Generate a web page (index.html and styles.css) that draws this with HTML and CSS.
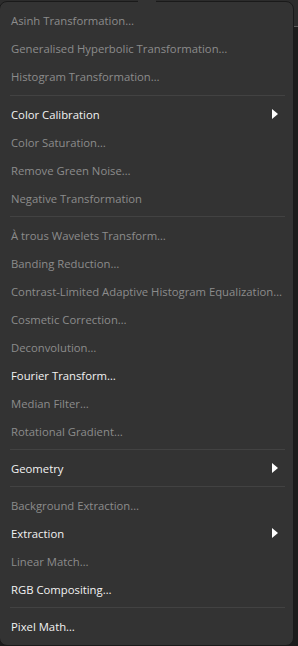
FILE: index.html
```html
<!DOCTYPE html>
<html lang="en">
<head>
  <meta charset="UTF-8" />
  <meta name="viewport" content="width=device-width, initial-scale=1.0" />
  <title>Process Menu</title>
  <link rel="stylesheet" href="styles.css">
</head>
<body>
  <div class="toolbar"></div>

  <div class="menu">
    <span class="notch"></span>
    <div class="item off">Asinh Transformation…</div>
    <div class="item off">Generalised Hyperbolic Transformation…</div>
    <div class="item off">Histogram Transformation…</div>
    <hr class="sep first">
    <div class="item sub">Color Calibration <span class="arrow"></span></div>
    <div class="item off">Color Saturation…</div>
    <div class="item off">Remove Green Noise…</div>
    <div class="item off">Negative Transformation</div>
    <hr class="sep">
    <div class="item off">À trous Wavelets Transform…</div>
    <div class="item off">Banding Reduction…</div>
    <div class="item off">Contrast-Limited Adaptive Histogram Equalization…</div>
    <div class="item off">Cosmetic Correction…</div>
    <div class="item off">Deconvolution…</div>
    <div class="item">Fourier Transform…</div>
    <div class="item off">Median Filter…</div>
    <div class="item off">Rotational Gradient…</div>
    <hr class="sep">
    <div class="item sub">Geometry <span class="arrow"></span></div>
    <hr class="sep">
    <div class="item off">Background Extraction…</div>
    <div class="item sub">Extraction <span class="arrow"></span></div>
    <div class="item off">Linear Match…</div>
    <div class="item">RGB Compositing…</div>
    <hr class="sep">
    <div class="item">Pixel Math…</div>
  </div>
</body>
</html>
```

FILE: styles.css
```css
:root {
  --menu-bg: #333333;
  --sep: #424242;
  --text: #f2f2f2;
  --muted: #8c8c8c;
}
body {
  margin: 0;
  background: #1c1c1c;
  height: 646px;
  overflow: hidden;
  position: relative;
  font-family: "Open Sans", "Noto Sans", sans-serif;
  font-size: 11.3px;
}
.toolbar {
  height: 26px;
  background: #2c2c2c;
  border-bottom: 1px solid #5a5a5a;
}
.menu {
  position: absolute;
  top: 1px;
  left: -1px;
  width: 295px;
  box-sizing: border-box;
  padding: 4px 0 5px;
  background: var(--menu-bg);
  border: 1px solid #1a1a1a;
  border-radius: 8px;
}
.notch {
  position: absolute;
  top: -2px;
  left: 138px;
  width: 18px;
  height: 4px;
  background: var(--menu-bg);
}
.item {
  height: 28px;
  display: flex;
  align-items: center;
  justify-content: space-between;
  padding: 0 15px 0 11px;
  color: var(--text);
  white-space: nowrap;
}
.item.off {
  color: var(--muted);
}
.arrow {
  width: 0;
  height: 0;
  border-top: 5.5px solid transparent;
  border-bottom: 5.5px solid transparent;
  border-left: 6px solid #ffffff;
}
.sep {
  margin: 4px 8px 4px 10px;
  border: 0;
  border-top: 1px solid var(--sep);
  height: 0;
}
.sep.first {
  margin-top: 5px;
}
```
